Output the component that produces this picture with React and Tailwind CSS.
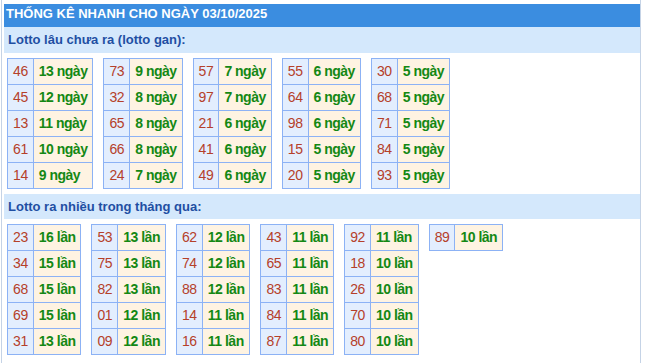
import React from "react";

const gan = [
  [["46", 13], ["45", 12], ["13", 11], ["61", 10], ["14", 9]],
  [["73", 9], ["32", 8], ["65", 8], ["66", 8], ["24", 7]],
  [["57", 7], ["97", 7], ["21", 6], ["41", 6], ["49", 6]],
  [["55", 6], ["64", 6], ["98", 6], ["15", 5], ["20", 5]],
  [["30", 5], ["68", 5], ["71", 5], ["84", 5], ["93", 5]],
];

const nhieu = [
  [["23", 16], ["34", 15], ["68", 15], ["69", 15], ["31", 13]],
  [["53", 13], ["75", 13], ["82", 13], ["01", 12], ["09", 12]],
  [["62", 12], ["74", 12], ["88", 12], ["14", 11], ["16", 11]],
  [["43", 11], ["65", 11], ["83", 11], ["84", 11], ["87", 11]],
  [["92", 11], ["18", 10], ["26", 10], ["70", 10], ["80", 10]],
  [["89", 10]],
];

function StatTable({ rows, unit }) {
  return (
    <table className="border-collapse">
      <tbody>
        {rows.map(([n, v], i) => (
          <tr key={i}>
            <td className="border border-[#8cb2f5] bg-[#e3eefe] px-[5px] py-0 text-center text-[14px] leading-[25px] tracking-[-0.4px] text-[#b5402a]">
              {n}
            </td>
            <td className="border border-[#8cb2f5] bg-[#fef3e2] px-[5px] py-0 text-left text-[14px] font-bold leading-[25px] tracking-[-0.5px] text-[#148814]">
              {v} {unit}
            </td>
          </tr>
        ))}
      </tbody>
    </table>
  );
}

export default function App() {
  return (
    <div className="h-[363px] w-[647px] overflow-hidden bg-white font-['Liberation_Sans',Arial,sans-serif]">
      <div className="ml-[1px] h-[363px] w-[640px] border-x border-[#c5d3e6] pl-[2px] pt-[4px]">
        <div className="h-[23px] bg-[#3b8de0] pl-[2px] text-[13px] font-bold leading-[20px] text-white">
          THỐNG KÊ NHANH CHO NGÀY 03/10/2025
        </div>
        <div className="h-[26px] bg-[#d4e8fc] pl-[4px] text-[13px] font-bold leading-[26px] text-[#1f4fa3]">
          Lotto lâu chưa ra (lotto gan):
        </div>
        <div className="mt-[5px] flex items-start gap-[10px] pl-[3px]">
          {gan.map((t, i) => (
            <StatTable key={i} rows={t} unit="ngày" />
          ))}
        </div>
        <div className="mt-[5px] h-[25px] bg-[#d4e8fc] pl-[4px] text-[13px] font-bold leading-[25px] text-[#1f4fa3]">
          Lotto ra nhiều trong tháng qua:
        </div>
        <div className="mt-[5px] flex items-start gap-[10px] pl-[3px]">
          {nhieu.map((t, i) => (
            <StatTable key={i} rows={t} unit="lần" />
          ))}
        </div>
      </div>
    </div>
  );
}
